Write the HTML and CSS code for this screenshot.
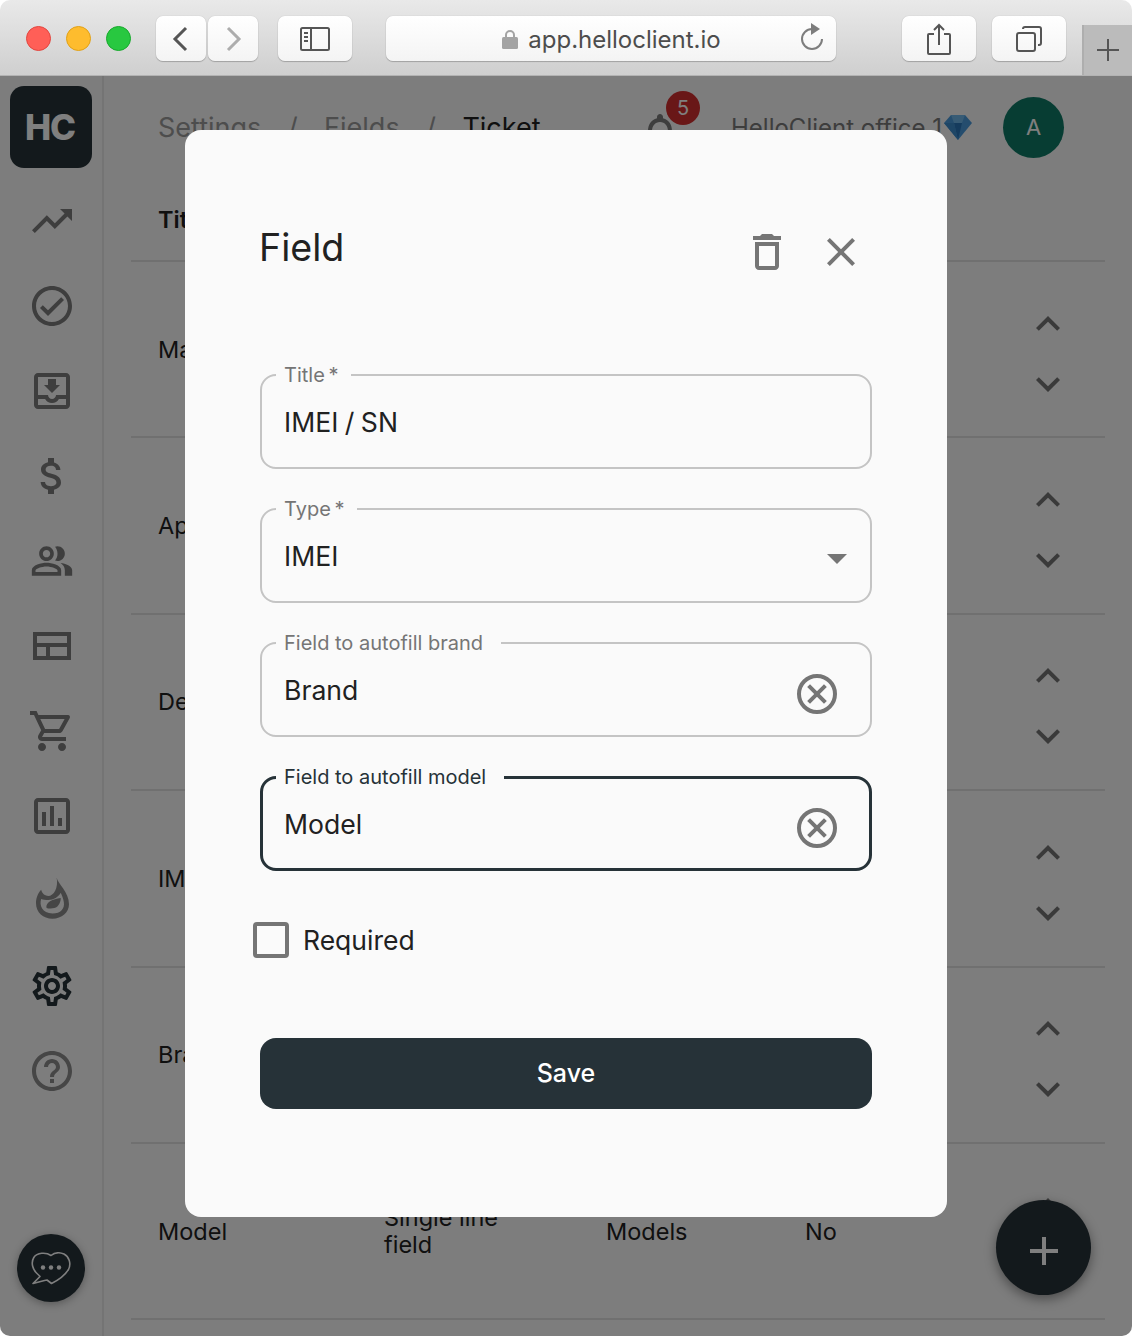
FILE: index.html
```html
<!DOCTYPE html>
<html lang="en">
<head>
  <meta charset="UTF-8" />
  <title>Field</title>
  <link rel="stylesheet" href="styles.css">
</head>
<body>
  <div class="window">
    <div class="toolbar">
      <div class="lights">
        <span class="light red"></span>
        <span class="light yellow"></span>
        <span class="light green"></span>
      </div>
      <div class="nav-group">
        <div class="tool-btn nav-btn">
          <svg width="18" height="26" viewBox="0 0 18 26"><path class="tool-line strong" d="M14 2L3 13l11 11"/></svg>
        </div>
        <div class="tool-btn nav-btn">
          <svg width="18" height="26" viewBox="0 0 18 26"><path class="tool-line faint" d="M4 2l11 11L4 24"/></svg>
        </div>
      </div>
      <div class="tool-btn side-btn">
        <svg width="30" height="26" viewBox="0 0 30 26"><rect class="tool-line strong thin" x="1" y="2" width="28" height="22" rx="1.5"/><path class="tool-line strong thin" d="M11 2v22M4 7h4M4 11h4M4 15h4"/></svg>
      </div>
      <div class="tool-btn url-bar">
        <svg class="lock" width="16" height="20" viewBox="0 0 16 20"><path d="M4 9V6a4 4 0 0 1 8 0v3" fill="none" stroke="#a3a3a3" stroke-width="2"/><rect y="8" width="16" height="12" rx="1.5" fill="#a3a3a3"/></svg>
        <span class="url-text">app.helloclient.io</span>
        <svg class="reload" width="26" height="28" viewBox="0 0 26 28"><path d="M13 6a10 10 0 1 0 10 10" fill="none" stroke="#7d7d7d" stroke-width="2"/><path d="M12 0l9 6-9 6z" fill="#7d7d7d"/></svg>
      </div>
      <div class="tool-btn share-btn">
        <svg width="24" height="32" viewBox="0 0 24 32"><path class="tool-line strong thin" d="M7 11H2a1 1 0 0 0-1 1v18a1 1 0 0 0 1 1h20a1 1 0 0 0 1-1V12a1 1 0 0 0-1-1h-5M12 22V2M7 7l5-5 5 5"/></svg>
      </div>
      <div class="tool-btn tabs-btn">
        <svg width="26" height="26" viewBox="0 0 26 26"><rect class="tool-line strong thin" x="1" y="7" width="18" height="18" rx="2"/><path class="tool-line strong thin" d="M7 3a2 2 0 0 1 2-2h14a2 2 0 0 1 2 2v14a2 2 0 0 1-2 2h-1"/></svg>
      </div>
      <div class="new-tab">
        <svg width="24" height="24" viewBox="0 0 24 24"><path class="tool-line strong thin" d="M12 1v22M1 12h22"/></svg>
      </div>
    </div>

    <div class="app">
      <div class="sidebar">
        <div class="logo">HC</div>
        <div class="nav-item"><svg class="nav-icon" viewBox="0 0 24 24"><path d="M16 6l2.29 2.29-4.88 4.88-4-4L2 16.59 3.41 18l6-6 4 4 6.3-6.29L22 12V6z"/></svg></div>
        <div class="nav-item"><svg class="nav-icon" viewBox="0 0 24 24"><path d="M12 2C6.48 2 2 6.48 2 12s4.48 10 10 10 10-4.48 10-10S17.52 2 12 2zm0 18c-4.41 0-8-3.59-8-8s3.59-8 8-8 8 3.59 8 8-3.59 8-8 8zm4.59-12.42L10 14.17l-2.59-2.58L6 13l4 4 8-8z"/></svg></div>
        <div class="nav-item"><svg class="nav-icon" viewBox="0 0 24 24"><path d="M19 3H5c-1.1 0-2 .9-2 2v14c0 1.1.9 2 2 2h14c1.1 0 2-.9 2-2V5c0-1.1-.9-2-2-2zm0 16H5v-3h3.56c.69 1.19 1.97 2 3.45 2s2.75-.81 3.45-2H19v3zm0-5h-4.99c0 1.1-.9 2-2 2s-2-.9-2-2H5V5h14v9zm-3-5h-2V6h-4v3H8l4 4 4-4z"/></svg></div>
        <div class="nav-item"><svg class="nav-icon" viewBox="0 0 24 24"><path d="M11.8 10.9c-2.27-.59-3-1.2-3-2.15 0-1.09 1.01-1.85 2.7-1.85 1.78 0 2.44.85 2.5 2.1h2.21c-.07-1.72-1.12-3.3-3.21-3.81V3h-3v2.16c-1.94.42-3.5 1.68-3.5 3.61 0 2.31 1.91 3.46 4.7 4.13 2.5.6 3 1.48 3 2.41 0 .69-.49 1.79-2.7 1.79-2.06 0-2.87-.92-2.98-2.1h-2.2c.12 2.19 1.76 3.42 3.68 3.83V21h3v-2.15c1.95-.37 3.5-1.5 3.5-3.55 0-2.84-2.43-3.81-4.7-4.4z"/></svg></div>
        <div class="nav-item"><svg class="nav-icon people" viewBox="0 0 24 24"><path d="M16.67 13.13C18.04 14.06 19 15.32 19 17v3h4v-3c0-2.18-3.57-3.47-6.33-3.87z"/><path d="M15 12c2.21 0 4-1.79 4-4s-1.79-4-4-4c-.47 0-.91.1-1.33.26C14.5 5.27 15 6.58 15 8s-.5 2.73-1.33 3.74c.42.16.86.26 1.33.26z"/><path d="M9 12c2.21 0 4-1.79 4-4s-1.79-4-4-4-4 1.79-4 4 1.79 4 4 4zm0-6c1.1 0 2 .9 2 2s-.9 2-2 2-2-.9-2-2 .9-2 2-2z"/><path d="M9 13c-2.67 0-8 1.34-8 4v3h16v-3c0-2.66-5.33-4-8-4zm6 5H3v-.99C3.2 16.29 6.3 15 9 15s5.8 1.29 6 2z"/></svg></div>
        <div class="nav-item"><svg class="table-icon" width="38" height="28" viewBox="0 0 38 28"><path d="M2 2h34v24H2zM2 13h34M15 13v13"/></svg></div>
        <div class="nav-item"><svg class="nav-icon" viewBox="0 0 24 24"><path d="M15.55 13c.75 0 1.41-.41 1.75-1.03l3.58-6.49c.37-.66-.11-1.48-.87-1.48H5.21l-.94-2H1v2h2l3.6 7.59-1.35 2.44C4.52 15.37 5.48 17 7 17h12v-2H7l1.1-2h7.45zM6.16 6h12.15l-2.76 5H8.53L6.16 6zM7 18c-1.1 0-1.99.9-1.99 2S5.9 22 7 22s2-.9 2-2-.9-2-2-2zm10 0c-1.1 0-1.99.9-1.99 2s.89 2 1.99 2 2-.9 2-2-.9-2-2-2z"/></svg></div>
        <div class="nav-item"><svg class="nav-icon" viewBox="0 0 24 24"><path fill-rule="evenodd" d="M19 3H5c-1.1 0-2 .9-2 2v14c0 1.1.9 2 2 2h14c1.1 0 2-.9 2-2V5c0-1.1-.9-2-2-2zm0 16H5V5h14v14z"/><path d="M7 10h2v7H7zM11 7h2v10h-2zM15 13h2v4h-2z"/></svg></div>
        <div class="nav-item"><svg class="flame-icon" width="33" height="42" viewBox="0 0 32 40"><path fill-rule="evenodd" d="M20 0c1 6 12 14 12 26 0 8-7 14-16 14S0 34 0 25c0-5 2-10 5-13 1 4 4 6 7 6 5 0 10-8 8-18zM5 21c-2 6 1 14 11 14 8 0 12-5 11-11-.5-3-2-7-3-9-2 4-7 7-12 7-3 0-5-.5-7-1z"/><path d="M10 29c0-5 6-8 14-9 0 5-3 10-8 10-2 0-5 1-6-1z"/></svg></div>
        <div class="nav-item"><svg class="nav-icon active" viewBox="0 0 24 24"><path d="M19.43 12.98c.04-.32.07-.64.07-.98 0-.34-.03-.66-.07-.98l2.11-1.65c.19-.15.24-.42.12-.64l-2-3.46c-.09-.16-.26-.25-.44-.25-.06 0-.12.01-.17.03l-2.49 1c-.52-.4-1.08-.73-1.69-.98l-.38-2.65C14.46 2.18 14.25 2 14 2h-4c-.25 0-.46.18-.49.42l-.38 2.65c-.61.25-1.17.59-1.69.98l-2.49-1c-.06-.02-.12-.03-.18-.03-.17 0-.34.09-.43.25l-2 3.46c-.13.22-.07.49.12.64l2.11 1.65c-.04.32-.07.65-.07.98 0 .33.03.66.07.98l-2.11 1.65c-.19.15-.24.42-.12.64l2 3.46c.09.16.26.25.44.25.06 0 .12-.01.17-.03l2.49-1c.52.4 1.08.73 1.69.98l.38 2.65c.03.24.24.42.49.42h4c.25 0 .46-.18.49-.42l.38-2.65c.61-.25 1.17-.59 1.69-.98l2.49 1c.06.02.12.03.18.03.17 0 .34-.09.43-.25l2-3.46c.12-.22.07-.49-.12-.64l-2.11-1.65zm-1.98-1.71c.04.31.05.52.05.73 0 .21-.02.43-.05.73l-.14 1.13.89.7 1.08.84-.7 1.21-1.27-.51-1.04-.42-.9.68c-.43.32-.84.56-1.25.73l-1.06.43-.16 1.13-.2 1.35h-1.4l-.19-1.35-.16-1.13-1.06-.43c-.43-.18-.83-.41-1.23-.71l-.91-.7-1.06.43-1.27.51-.7-1.21 1.08-.84.89-.7-.14-1.13c-.03-.31-.05-.54-.05-.74s.02-.43.05-.73l.14-1.13-.89-.7-1.08-.84.7-1.21 1.27.51 1.04.42.9-.68c.43-.32.84-.56 1.25-.73l1.06-.43.16-1.13.2-1.35h1.39l.19 1.35.16 1.13 1.06.43c.43.18.83.41 1.23.71l.91.7 1.06-.43 1.27-.51.7 1.21-1.07.85-.89.7.14 1.13zM12 8c-2.21 0-4 1.79-4 4s1.79 4 4 4 4-1.79 4-4-1.79-4-4-4zm0 6c-1.1 0-2-.9-2-2s.9-2 2-2 2 .9 2 2-.9 2-2 2z"/></svg></div>
        <div class="nav-item"><svg class="nav-icon soft" viewBox="0 0 24 24"><path d="M11 18h2v-2h-2v2zm1-16C6.48 2 2 6.48 2 12s4.48 10 10 10 10-4.48 10-10S17.52 2 12 2zm0 18c-4.41 0-8-3.59-8-8s3.59-8 8-8 8 3.59 8 8-3.59 8-8 8zm0-14c-2.21 0-4 1.79-4 4h2c0-1.1.9-2 2-2s2 .9 2 2c0 2-3 1.75-3 5h2c0-2.25 3-2.5 3-5 0-2.21-1.79-4-4-4z"/></svg></div>
        <div class="chat-btn">
          <svg width="40" height="33" viewBox="0 0 40 33"><path d="M20 3.500C15 0 6 .5 2.800 5.500-.5 11 2 18 6 21.500c1.500 1.300 2.500 2.200 3 3L2 31.500l11.500-3 2.500-.5 4.500 3.500c5-2.500 13-7.500 17-14 3-6 .5-13-4.500-15.500C28 0 23 1 20 3.500z" fill="none" stroke="#fff" stroke-width="1.600" stroke-linejoin="round"/><circle cx="12" cy="15.500" r="2.200" fill="#fff"/><circle cx="20" cy="15.500" r="2.200" fill="#fff"/><circle cx="28" cy="15.500" r="2.200" fill="#fff"/></svg>
        </div>
      </div>

      <div class="main">
        <div class="topbar">
          <div class="crumbs">
            <span>Settings</span>
            <span>/</span>
            <span>Fields</span>
            <span>/</span>
            <span class="crumb-current">Ticket</span>
          </div>
          <div class="bell">
            <svg class="bell-icon" viewBox="0 0 24 24"><path d="M12 22c1.100 0 2-.9 2-2h-4c0 1.100.9 2 2 2zm6-6v-5c0-3.070-1.630-5.640-4.500-6.320V4c0-.83-.67-1.500-1.500-1.500s-1.500.67-1.500 1.500v.68C7.640 5.360 6 7.920 6 11v5l-2 2v1h16v-1l-2-2zm-2 1H8v-6c0-2.480 1.510-4.500 4-4.500s4 2.020 4 4.500v6z"/></svg>
            <span class="badge">5</span>
          </div>
          <div class="office">HelloClient office 1</div>
          <svg class="gem" width="28" height="25" viewBox="0 0 28 25"><path d="M7 0h14l7 8-14 17L0 8z" fill="#4a9bdc"/><path d="M7 0l3 8h8l3-8z" fill="#6fb6ea"/><path d="M10 8h8l-4 17z" fill="#2a76bb"/><path d="M0 8h10l4 17z" fill="#3d8ccd"/></svg>
          <div class="avatar">A</div>
        </div>

        <div class="row head-row">
          <div>Title</div>
        </div>
        <div class="row">
          <div>Make</div>
          <div></div>
          <div></div>
          <div></div>
          <div class="sort"><svg class="chevron" viewBox="0 0 24 24"><path d="M12 8l-6 6 1.410 1.410L12 10.830l4.590 4.580L18 14z"/></svg><svg class="chevron" viewBox="0 0 24 24"><path d="M16.590 8.590L12 13.170 7.410 8.590 6 10l6 6 6-6z"/></svg></div>
        </div>
        <div class="row">
          <div>App</div>
          <div></div>
          <div></div>
          <div></div>
          <div class="sort"><svg class="chevron" viewBox="0 0 24 24"><path d="M12 8l-6 6 1.410 1.410L12 10.830l4.590 4.580L18 14z"/></svg><svg class="chevron" viewBox="0 0 24 24"><path d="M16.590 8.590L12 13.170 7.410 8.590 6 10l6 6 6-6z"/></svg></div>
        </div>
        <div class="row">
          <div>Defect</div>
          <div></div>
          <div></div>
          <div></div>
          <div class="sort"><svg class="chevron" viewBox="0 0 24 24"><path d="M12 8l-6 6 1.410 1.410L12 10.830l4.590 4.580L18 14z"/></svg><svg class="chevron" viewBox="0 0 24 24"><path d="M16.590 8.590L12 13.170 7.410 8.590 6 10l6 6 6-6z"/></svg></div>
        </div>
        <div class="row">
          <div>IMEI</div>
          <div></div>
          <div></div>
          <div></div>
          <div class="sort"><svg class="chevron" viewBox="0 0 24 24"><path d="M12 8l-6 6 1.410 1.410L12 10.830l4.590 4.580L18 14z"/></svg><svg class="chevron" viewBox="0 0 24 24"><path d="M16.590 8.590L12 13.170 7.410 8.590 6 10l6 6 6-6z"/></svg></div>
        </div>
        <div class="row">
          <div>Brand</div>
          <div></div>
          <div></div>
          <div></div>
          <div class="sort"><svg class="chevron" viewBox="0 0 24 24"><path d="M12 8l-6 6 1.410 1.410L12 10.830l4.590 4.580L18 14z"/></svg><svg class="chevron" viewBox="0 0 24 24"><path d="M16.590 8.590L12 13.170 7.410 8.590 6 10l6 6 6-6z"/></svg></div>
        </div>
        <div class="row">
          <div>Model</div>
          <div class="type-cell">Single line field</div>
          <div>Models</div>
          <div>No</div>
          <div class="sort"><svg class="chevron" viewBox="0 0 24 24"><path d="M12 8l-6 6 1.410 1.410L12 10.830l4.590 4.580L18 14z"/></svg><svg class="chevron" viewBox="0 0 24 24"><path d="M16.590 8.590L12 13.170 7.410 8.590 6 10l6 6 6-6z"/></svg></div>
        </div>
      </div>

      <div class="fab">
        <svg class="fab-icon" viewBox="0 0 24 24"><path d="M19 13h-6v6h-2v-6H5v-2h6V5h2v6h6v2z"/></svg>
      </div>

      <div class="overlay">
        <div class="modal">
          <div class="modal-head">
            <div class="modal-title">Field</div>
            <svg class="modal-icon" viewBox="0 0 24 24"><path d="M16 9v10H8V9h8m-1.500-6h-5l-1 1H5v2h14V4h-3.500l-1-1zM18 7H6v12c0 1.100.9 2 2 2h8c1.100 0 2-.9 2-2V7z"/></svg>
            <svg class="modal-icon" viewBox="0 0 24 24"><path d="M19 6.410L17.590 5 12 10.590 6.410 5 5 6.410 10.590 12 5 17.590 6.410 19 12 13.410 17.590 19 19 17.590 13.410 12z"/></svg>
          </div>

          <div class="fields">
            <div class="field">
              <span class="field-label required">Title *</span>
              <span class="field-value">IMEI / SN</span>
            </div>
            <div class="field">
              <span class="field-label required">Type *</span>
              <span class="field-value">IMEI</span>
              <svg class="field-arrow" viewBox="0 0 24 24"><path d="M7 10l5 5 5-5z"/></svg>
            </div>
            <div class="field">
              <span class="field-label">Field to autofill brand</span>
              <span class="field-value">Brand</span>
              <svg class="field-clear" viewBox="0 0 24 24"><circle cx="12" cy="12" r="9"/><path d="M7.800 7.800l8.400 8.400M16.200 7.800l-8.400 8.400"/></svg>
            </div>
            <div class="field focused">
              <span class="field-label">Field to autofill model</span>
              <span class="field-value">Model</span>
              <svg class="field-clear" viewBox="0 0 24 24"><circle cx="12" cy="12" r="9"/><path d="M7.800 7.800l8.400 8.400M16.200 7.800l-8.400 8.400"/></svg>
            </div>
          </div>

          <div class="check-row">
            <span class="checkbox"></span>
            <span class="check-text">Required</span>
          </div>

          <div class="save-btn">Save</div>
        </div>
      </div>
    </div>
  </div>
</body>
</html>
```

FILE: styles.css
```css
html, body {
  margin: 0;
  padding: 0;
  background-color: #fff;
}

body {
  font-family: "Inter", "Liberation Sans", sans-serif;
  color: #212121;
}

.window {
  height: 1336px;
  border-radius: 10px;
  overflow: hidden;
  display: flex;
  flex-direction: column;
}

/* browser chrome */
.toolbar {
  height: 75px;
  box-sizing: content-box;
  flex-shrink: 0;
  display: flex;
  align-items: flex-start;
  padding-left: 26px;
  background: linear-gradient(#e9e9e9, #cfcfcf);
  border-bottom: 1px solid #b3b3b3;
}

.lights {
  display: flex;
  gap: 15px;
  margin-top: 26px;
  margin-right: 25px;
}

.light {
  width: 25px;
  height: 25px;
  border-radius: 50%;
  box-sizing: border-box;
}

.red { background-color: #ff5f57; border: 1px solid #e2463f; }
.yellow { background-color: #febc2e; border: 1px solid #e1a116; }
.green { background-color: #28c840; border: 1px solid #17a92c; }

.tool-btn {
  height: 45px;
  margin-top: 16px;
  box-sizing: border-box;
  display: flex;
  align-items: center;
  justify-content: center;
  background: linear-gradient(#fff, #f4f4f4);
  border-radius: 7px;
  box-shadow: 0 1px 1px rgba(0, 0, 0, 0.22), 0 0 1px rgba(0, 0, 0, 0.25);
}

.tool-line {
  fill: none;
  stroke-width: 3;
}

.tool-line.thin { stroke-width: 2; }
.tool-line.strong { stroke: #555; }
.tool-line.faint { stroke: #adadad; }

.nav-group {
  display: flex;
  gap: 2px;
  margin-right: 20px;
}

.nav-btn { width: 50px; }
.side-btn { width: 74px; margin-right: 34px; }

.url-bar {
  width: 450px;
  position: relative;
  margin-right: 66px;
  gap: 10px;
  padding-left: 1px;
}

.url-text {
  font-size: 24px;
  color: #4d4d4d;
  margin-top: 1px;
}

.reload {
  position: absolute;
  right: 11px;
  top: 7px;
}

.share-btn { width: 74px; margin-right: 16px; }
.tabs-btn { width: 74px; }

.new-tab {
  width: 50px;
  height: 50px;
  margin-left: auto;
  margin-top: 25px;
  display: flex;
  align-items: center;
  justify-content: center;
  background-color: #bbb;
  border-left: 2px solid #aeaeae;
  box-sizing: border-box;
}

/* app behind the dialog */
.app {
  flex: 1;
  display: flex;
  position: relative;
  background-color: #fafafa;
  min-height: 0;
}

.sidebar {
  width: 102px;
  border-right: 2px solid #e8e8e8;
  display: flex;
  flex-direction: column;
  align-items: center;
  flex-shrink: 0;
}

.logo {
  width: 82px;
  height: 82px;
  margin-top: 10px;
  margin-bottom: 10px;
  padding-right: 2px;
  box-sizing: border-box;
  border-radius: 14px;
  background-color: #263238;
  color: #fff;
  font-size: 35px;
  font-weight: 800;
  letter-spacing: -1px;
  display: flex;
  align-items: center;
  justify-content: center;
}

.nav-item {
  height: 85px;
  width: 100%;
  padding-left: 2px;
  box-sizing: border-box;
  flex-shrink: 0;
  display: flex;
  align-items: center;
  justify-content: center;
}

.nav-icon {
  width: 48px;
  height: 48px;
  fill: #7c7c7c;
}

.nav-icon.people { width: 44px; height: 44px; }
.nav-icon.active { fill: #263238; }
.nav-icon.soft { fill: #8c8c8c; }

.table-icon {
  fill: none;
  stroke: #7c7c7c;
  stroke-width: 4;
}

.flame-icon {
  fill: #8c8c8c;
  margin-top: -6px;
}

.chat-btn {
  width: 68px;
  height: 68px;
  margin-top: auto;
  margin-bottom: 34px;
  border-radius: 50%;
  background-color: #263238;
  box-shadow: 0 2px 8px rgba(0, 0, 0, 0.3);
  display: flex;
  align-items: center;
  justify-content: center;
}

.main {
  flex: 1;
  padding: 0 27px;
  min-width: 0;
}

.topbar {
  height: 100px;
  display: flex;
  align-items: center;
  font-size: 27px;
  padding-left: 27px;
  padding-top: 2px;
  box-sizing: border-box;
}

.crumbs {
  display: flex;
  gap: 26.500px;
  color: #9a9a9a;
  width: 478px;
}

.crumb-current { color: #212121; }

.bell {
  width: 48px;
  height: 48px;
  position: relative;
  margin-right: 47px;
  margin-top: 12px;
}

.bell-icon {
  width: 48px;
  height: 48px;
  fill: #7c7c7c;
}

.badge {
  position: absolute;
  left: 30px;
  top: -18px;
  width: 34px;
  height: 34px;
  border-radius: 50%;
  background-color: #d32f2f;
  color: #fff;
  font-size: 20px;
  display: flex;
  align-items: center;
  justify-content: center;
}

.office {
  font-size: 24px;
  color: #7a7a7a;
  white-space: nowrap;
}

.gem { margin-left: 2px; }

.avatar {
  width: 61px;
  height: 61px;
  margin-left: 31px;
  border-radius: 50%;
  background-color: #0e7a66;
  color: #fff;
  font-size: 22px;
  display: flex;
  align-items: center;
  justify-content: center;
}

.row {
  height: 176.400px;
  box-sizing: border-box;
  display: grid;
  grid-template-columns: 226px 222px 199px 1fr 48px;
  align-items: center;
  padding: 0 33px 0 27px;
  border-bottom: 2px solid #e0e0e0;
  font-size: 23.500px;
  line-height: 27px;
}

.head-row {
  height: 86px;
  font-weight: 600;
  padding-top: 3px;
}

.type-cell { max-width: 130px; }

.sort {
  display: flex;
  flex-direction: column;
  gap: 12px;
  padding-top: 9px;
}

.chevron {
  width: 48px;
  height: 48px;
  fill: #757575;
}

.fab {
  position: absolute;
  left: 996px;
  top: 1124px;
  width: 95px;
  height: 95px;
  border-radius: 50%;
  background-color: #263238;
  box-shadow: 0 4px 12px rgba(0, 0, 0, 0.4);
  display: flex;
  align-items: center;
  justify-content: center;
}

.fab-icon {
  width: 48px;
  height: 48px;
  fill: #fff;
  margin-top: 6px;
}

/* dialog */
.overlay {
  position: absolute;
  inset: 0;
  background-color: rgba(0, 0, 0, 0.5);
}

.modal {
  position: absolute;
  left: 185px;
  top: 54px;
  width: 762px;
  height: 1087px;
  box-sizing: border-box;
  padding: 0 75px;
  border-radius: 16px;
  background-color: #fafafa;
}

.modal-head {
  display: flex;
  align-items: center;
  height: 48px;
  margin-top: 98px;
  padding-right: 7px;
  gap: 26px;
}

.modal-title {
  flex: 1;
  font-size: 37.600px;
  margin-top: -10px;
  margin-left: -1px;
}

.modal-icon {
  width: 48px;
  height: 48px;
  fill: #757575;
}

.fields {
  display: flex;
  flex-direction: column;
  gap: 39px;
  margin-top: 98px;
}

.field {
  height: 95px;
  box-sizing: border-box;
  position: relative;
  display: flex;
  align-items: center;
  padding: 0 23px 0 22px;
  border: 2px solid #c4c4c4;
  border-radius: 16px;
}

.field.focused {
  border: 3px solid #263238;
  padding: 0 22px 0 21px;
}

.field-label {
  position: absolute;
  left: 14px;
  top: -13px;
  padding: 0 18px 0 8px;
  font-size: 20px;
  line-height: 24px;
  color: #757575;
  background-color: #fafafa;
}

.field-label.required {
  padding-right: 13px;
  word-spacing: -2px;
}

.focused .field-label {
  left: 13px;
  top: -14px;
  color: #263238;
}

.field-value {
  flex: 1;
  font-size: 26.600px;
  word-spacing: -1px;
}

.field-arrow {
  width: 48px;
  height: 48px;
  fill: #757575;
  margin-right: -14px;
  margin-top: 4px;
}

.field-clear {
  width: 48px;
  height: 48px;
  fill: none;
  stroke: #757575;
  stroke-width: 2;
  margin-right: 6px;
  margin-top: 8px;
}

.check-row {
  display: flex;
  align-items: center;
  gap: 14px;
  margin-top: 51px;
  margin-left: -7px;
}

.checkbox {
  width: 36px;
  height: 36px;
  box-sizing: border-box;
  border: 4px solid #757575;
  border-radius: 4px;
}

.check-text {
  font-size: 26.500px;
}

.save-btn {
  height: 71px;
  margin-top: 80px;
  padding-bottom: 2px;
  box-sizing: border-box;
  border-radius: 16px;
  background-color: #263238;
  color: #fff;
  font-size: 25px;
  font-weight: 500;
  display: flex;
  align-items: center;
  justify-content: center;
}
```
